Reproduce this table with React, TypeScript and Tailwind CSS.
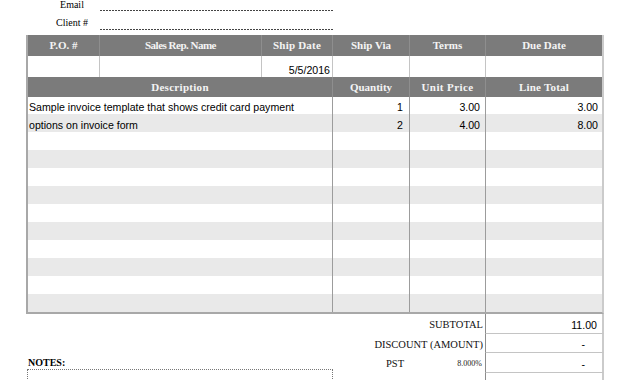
import React from "react";

const serif = "font-['Liberation_Serif','Times_New_Roman',serif]";
const sans = "font-['Liberation_Sans',Arial,sans-serif]";

const items: { desc: string; qty: string; price: string; total: string }[] = [
  { desc: "Sample invoice template that shows credit card payment", qty: "1", price: "3.00", total: "3.00" },
  { desc: "options on invoice form", qty: "2", price: "4.00", total: "8.00" },
];

export default function App() {
  const rows = Array.from({ length: 12 }, (_, i) => items[i] ?? { desc: "", qty: "", price: "", total: "" });
  const hdr = `${serif} bg-[#7b7b7b] text-[#f4f4f4] font-bold text-[11px] flex items-center justify-center border-r border-[#8e8e8e]`;
  return (
    <div className="w-[630px] h-[380px] overflow-hidden bg-white text-black">
      {/* Email / Client */}
      <div className="flex h-[18px]">
        <div className={`${serif} ml-[50px] w-[44px] text-center text-[10px] leading-[10px] pt-[0px]`}>Email</div>
        <div className="ml-[6px] w-[233px] flex flex-col">
          <div className="h-[10px]" />
          <div className="h-[1px] bg-[repeating-linear-gradient(90deg,#444_0_2px,transparent_2px_3px)]" />
        </div>
      </div>
      <div className="flex h-[17px]">
        <div className={`${serif} ml-[50px] w-[44px] text-center text-[10px] leading-[10px] pt-[0px]`}>Client #</div>
        <div className="ml-[6px] w-[233px] flex flex-col">
          <div className="h-[11px]" />
          <div className="h-[1px] bg-[repeating-linear-gradient(90deg,#444_0_2px,transparent_2px_3px)]" />
        </div>
      </div>

      {/* Table */}
      <div className="ml-[26px] w-[578px] border-l-2 border-r-2 border-b-2 border-l-[#a8a8a8] border-r-[#cbcbcb] border-b-[#a8a8a8]">
        <div className="grid grid-cols-[72px_162px_71px_77px_76px_116px] h-[21px]">
          <div className={hdr}>P.O. #</div>
          <div className={`${hdr} tracking-[-0.5px]`}>Sales Rep. Name</div>
          <div className={`${hdr} tracking-[0.2px]`}>Ship Date</div>
          <div className={hdr}>Ship Via</div>
          <div className={hdr}>Terms</div>
          <div className={`${hdr} border-r-0`}>Due Date</div>
        </div>
        <div className={`grid grid-cols-[72px_162px_71px_77px_76px_116px] h-[21px] ${sans} text-[10.6px] leading-[12px]`}>
          <div className="border-r border-[#c4c4c4]" />
          <div className="border-r border-[#c4c4c4]" />
          <div className="border-r border-[#c4c4c4] flex items-end justify-end pr-[2px] pb-[1px]">5/5/2016</div>
          <div className="border-r border-[#c4c4c4]" />
          <div className="border-r border-[#c4c4c4]" />
          <div />
        </div>
        <div className="grid grid-cols-[305px_77px_76px_116px] h-[20px]">
          <div className={`${hdr} tracking-[0.3px]`}>Description</div>
          <div className={hdr}>Quantity</div>
          <div className={`${hdr} tracking-[0.4px]`}>Unit Price</div>
          <div className={`${hdr} border-r-0 tracking-[0.2px]`}>Line Total</div>
        </div>
        {rows.map((r, i) => (
          <div
            key={i}
            className={`grid grid-cols-[305px_77px_76px_116px] ${i === 0 ? "h-[17px]" : "h-[18px]"} ${sans} text-[10.6px] leading-[12px] ${i % 2 === 1 ? "bg-[#e9e9e9]" : "bg-white"}`}
          >
            <div className="border-r border-[#9c9c9c] flex items-end pl-[1px] pb-[1px] whitespace-nowrap overflow-hidden">{r.desc}</div>
            <div className="border-r border-[#9c9c9c] flex items-end justify-end pr-[6px] pb-[1px]">{r.qty}</div>
            <div className="border-r border-[#9c9c9c] flex items-end justify-end pr-[5px] pb-[1px]">{r.price}</div>
            <div className="flex items-end justify-end pr-[4px] pb-[1px]">{r.total}</div>
          </div>
        ))}
      </div>

      {/* Totals & notes */}
      <div className="flex ml-[26px] w-[578px]">
        <div className="w-[307px] flex flex-col">
          <div className={`${serif} mt-[43px] pl-[2px] text-[10px] leading-[12px] font-bold`}>NOTES:</div>
          <div className="ml-[1px] h-[40px] border border-dotted border-[#777]" />
        </div>
        <div className="w-[271px] flex flex-col">
          <TotalRow label={<span className="pr-[2px]">SUBTOTAL</span>} value="11.00" valuePad="pr-[5px]" />
          <TotalRow label={<span className="pr-[2px]">DISCOUNT (AMOUNT)</span>} value="-" valuePad="pr-[17px]" />
          <TotalRow
            label={
              <div className="flex w-full items-center">
                <span className="ml-[53px]">PST</span>
                <span className="flex-1 text-right pr-[3px] text-[8px] text-[#222]">8.000%</span>
              </div>
            }
            value="-"
            valuePad="pr-[17px]"
          />
          <TotalRow
            label={
              <div className="flex w-full items-center">
                <span className="ml-[54px]">GST</span>
                <span className="flex-1 text-right pr-[3px] text-[8px] text-[#222]">5.000%</span>
              </div>
            }
            value="-"
            valuePad="pr-[17px]"
          />
        </div>
      </div>
    </div>
  );
}

function TotalRow({ label, value, valuePad }: { label: React.ReactNode; value: string; valuePad: string }) {
  return (
    <div className="flex h-[19.5px]">
      <div className={`${serif} w-[152px] text-[10.5px] leading-[12px] flex items-center justify-end pt-[3px] text-[#111]`}>{label}</div>
      <div
        className={`${sans} w-[119px] text-[10.6px] leading-[12px] flex items-center justify-end ${valuePad} pt-[3px] border-l border-l-[#8c8c8c] border-r-2 border-r-[#cbcbcb] border-b border-b-[#c4c4c4]`}
      >
        {value}
      </div>
    </div>
  );
}
